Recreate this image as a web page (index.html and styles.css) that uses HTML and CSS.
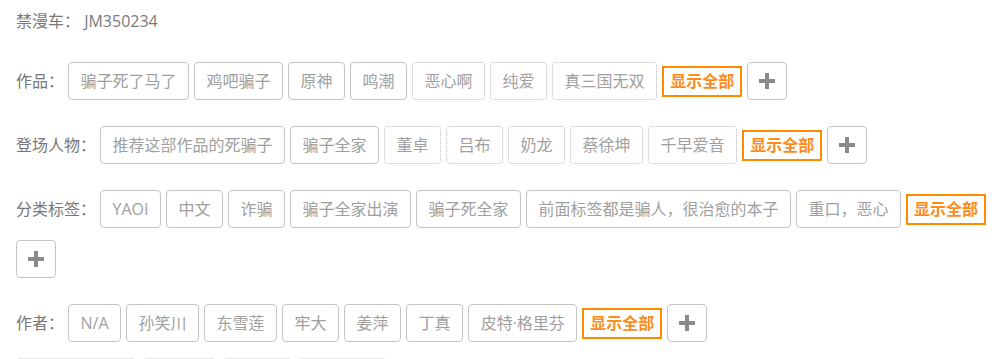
FILE: index.html
```html
<!DOCTYPE html>
<html lang="zh-CN">
<head>
<meta charset="utf-8">
<title>详情</title>
<link rel="stylesheet" href="styles.css">
</head>
<body>
<div class="page">
  <div class="id-line">禁漫车：&nbsp;JM350234</div>

  <div class="row">
    <span class="label">作品：</span>
    <a class="tag">骗子死了马了</a>
    <a class="tag">鸡吧骗子</a>
    <a class="tag">原神</a>
    <a class="tag">鸣潮</a>
    <a class="tag dotted">恶心啊</a>
    <a class="tag dotted">纯爱</a>
    <a class="tag dotted">真三国无双</a>
    <a class="show-all">显示全部</a>
    <a class="add"><svg viewBox="0 0 16 16" width="16" height="16"><path d="M6 0h4v6h6v4h-6v6h-4v-6h-6v-4h6z" fill="#8a8a8a"/></svg></a>
  </div>

  <div class="row">
    <span class="label">登场人物：</span>
    <a class="tag">推荐这部作品的死骗子</a>
    <a class="tag">骗子全家</a>
    <a class="tag dotted">董卓</a>
    <a class="tag dotted">吕布</a>
    <a class="tag dotted">奶龙</a>
    <a class="tag dotted">蔡徐坤</a>
    <a class="tag dotted">千早爱音</a>
    <a class="show-all">显示全部</a>
    <a class="add"><svg viewBox="0 0 16 16" width="16" height="16"><path d="M6 0h4v6h6v4h-6v6h-4v-6h-6v-4h6z" fill="#8a8a8a"/></svg></a>
  </div>

  <div class="row">
    <span class="label">分类标签：</span>
    <a class="tag">YAOI</a>
    <a class="tag">中文</a>
    <a class="tag">诈骗</a>
    <a class="tag">骗子全家出演</a>
    <a class="tag">骗子死全家</a>
    <a class="tag">前面标签都是骗人，很治愈的本子</a>
    <a class="tag">重口，恶心</a>
    <a class="show-all">显示全部</a>
    <a class="add"><svg viewBox="0 0 16 16" width="16" height="16"><path d="M6 0h4v6h6v4h-6v6h-4v-6h-6v-4h6z" fill="#8a8a8a"/></svg></a>
  </div>

  <div class="row">
    <span class="label">作者：</span>
    <a class="tag">N/A</a>
    <a class="tag">孙笑川</a>
    <a class="tag">东雪莲</a>
    <a class="tag">牢大</a>
    <a class="tag">姜萍</a>
    <a class="tag">丁真</a>
    <a class="tag">皮特·格里芬</a>
    <a class="show-all">显示全部</a>
    <a class="add"><svg viewBox="0 0 16 16" width="16" height="16"><path d="M6 0h4v6h6v4h-6v6h-4v-6h-6v-4h6z" fill="#8a8a8a"/></svg></a>
  </div>

  <div class="actions">
    <span class="act w1"></span>
    <span class="act w2"></span>
    <span class="act w3"></span>
    <span class="act w4"></span>
  </div>
</div>
</body>
</html>
```

FILE: styles.css
```css
html, body {
  margin: 0;
  padding: 0;
  background: #ffffff;
}

body {
  font-family: "Open Sans", "Noto Sans CJK SC", sans-serif;
  font-size: 16px;
  color: #777777;
}

.page {
  padding: 9px 0 0 16px;
}

.id-line {
  line-height: 24px;
  margin-bottom: 29px;
  color: #7a7a7a;
}

.row {
  display: flex;
  flex-wrap: wrap;
  align-items: center;
  column-gap: 5px;
  row-gap: 12px;
  margin-bottom: 26px;
}

.label {
  line-height: 24px;
  color: #777777;
  margin-right: -1px;
}

.tag {
  display: inline-block;
  box-sizing: border-box;
  height: 38px;
  padding: 6px 11.5px;
  line-height: 24px;
  border: 1px solid #c4c4c4;
  border-radius: 4px;
  color: #a0a0a0;
  white-space: nowrap;
}

.tag.dotted {
  border: 1px dotted #bdbdbd;
}

.show-all {
  display: inline-block;
  box-sizing: border-box;
  height: 31px;
  padding: 1px 6px;
  line-height: 25px;
  border: 2px solid #ff8c00;
  color: #ff8c1a;
  font-weight: bold;
  white-space: nowrap;
}

.add {
  display: flex;
  align-items: center;
  justify-content: center;
  box-sizing: border-box;
  width: 40px;
  height: 38px;
  border: 1px solid #c4c4c4;
  border-radius: 4px;
}

.actions {
  display: flex;
  gap: 7px;
  margin-top: -10px;
}

.act {
  display: block;
  height: 30px;
  border: 1px solid #e6e6e6;
  border-radius: 3px;
}

.w1 { width: 118px; }
.w2 { width: 71px; }
.w3 { width: 67px; }
.w4 { width: 85px; }
```
